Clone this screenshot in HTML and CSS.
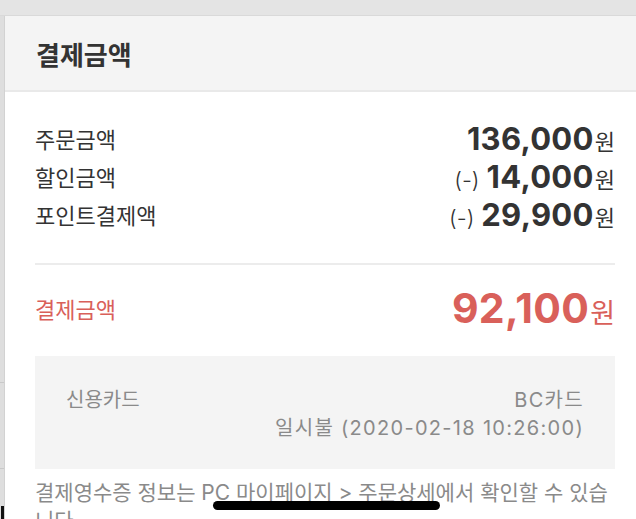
FILE: index.html
```html
<!DOCTYPE html>
<html lang="ko">
<head>
<meta charset="utf-8">
<link rel="stylesheet" href="styles.css">
</head>
<body>
<div class="topband"></div>
<div class="main">
  <div class="side">
    <div class="side-seg seg1"></div>
    <div class="side-seg seg2"></div>
    <div class="side-rest"></div>
  </div>
  <div class="sheet">
    <div class="sheet-head"><h1 class="title">결제금액</h1></div>
    <div class="sheet-body">
      <div class="rows">
        <div class="row"><span class="label">주문금액</span><span class="amount"><b class="num">136,000</b><span class="won">원</span></span></div>
        <div class="row"><span class="label">할인금액</span><span class="amount"><span class="minus">(-)</span><b class="num">14,000</b><span class="won">원</span></span></div>
        <div class="row"><span class="label">포인트결제액</span><span class="amount"><span class="minus">(-)</span><b class="num">29,900</b><span class="won">원</span></span></div>
      </div>
      <div class="divider"></div>
      <div class="row total"><span class="label">결제금액</span><span class="amount"><b class="num">92,100</b><span class="won">원</span></span></div>
      <div class="paybox">
        <div class="paybox-row"><span>신용카드</span><span class="paybox-right">BC카드<br>일시불 (2020-02-18 10:26:00)</span></div>
      </div>
      <p class="notice">결제영수증 정보는 PC 마이페이지 &gt; 주문상세에서 확인할 수 있습니다</p>
    </div>
  </div>
</div>
<div class="corner-mark"></div>
<div class="home-indicator"></div>
</body>
</html>
```
FILE: styles.css
```css
html, body {
  margin: 0;
  padding: 0;
  width: 636px;
  height: 519px;
  overflow: hidden;
  background: #ffffff;
  font-family: "Noto Sans CJK KR", "Noto Sans", sans-serif;
  color: #333333;
}
.topband {
  height: 15px;
  background: #e4e4e4;
  border-bottom: 1px solid #d9d9d9;
}
.main {
  display: flex;
}
.side {
  width: 4px;
  flex-shrink: 0;
  background: #dedede;
  border-right: 1px solid #d2d2d2;
  display: flex;
  flex-direction: column;
  height: 503px;
}
.side-seg {
  border-bottom: 1px solid #c9c9c9;
}
.seg1 { height: 366px; }
.seg2 { height: 85px; }
.side-rest { flex: 1; }
.sheet {
  width: 640px;
  flex-shrink: 0;
  background: #ffffff;
}
.sheet-head {
  height: 74px;
  background: #f4f4f4;
  border-bottom: 2px solid #e9e9e9;
  display: flex;
  align-items: center;
  padding-left: 31px;
}
.title {
  margin: 0;
  font-size: 26px;
  font-weight: 700;
  color: #333;
  line-height: 1;
  padding-top: 1px;
}
.sheet-body {
  padding: 0 30px;
}
.rows {
  padding-top: 27px;
}
.row {
  display: flex;
  justify-content: space-between;
  align-items: center;
  height: 38px;
}
.label {
  font-size: 22px;
  color: #333;
}
.amount {
  display: flex;
  align-items: baseline;
}
.num {
  font-family: "Inter", "Roboto", sans-serif;
  font-weight: 700;
  font-size: 31px;
  color: #333;
  letter-spacing: 0.3px;
}
.minus {
  font-family: "Inter", "Roboto", sans-serif;
  font-size: 22px;
  font-weight: 300;
  margin-right: 7px;
  color: #333;
}
.won {
  font-size: 22px;
  margin-left: 1px;
  color: #333;
}
.divider {
  height: 2px;
  background: #ececec;
  margin-top: 30px;
}
.row.total {
  height: 60px;
  margin-top: 13px;
}
.total .label { color: #d9605a; }
.total .num { color: #d9605a; font-size: 41px; }
.total .won { color: #d9605a; font-size: 27px; }
.paybox {
  background: #f4f4f4;
  margin-top: 18px;
  padding: 30px 32px 27px 31px;
}
.paybox-row {
  display: flex;
  justify-content: space-between;
  align-items: flex-start;
  font-family: "Inter", "Noto Sans CJK KR", sans-serif;
  font-size: 20px;
  line-height: 28px;
  color: #8a8a8a;
}
.paybox-right {
  text-align: right;
  letter-spacing: 1.3px;
  margin-right: -1px;
}
.notice {
  margin: 10px 0 0;
  font-family: "Inter", "Noto Sans CJK KR", sans-serif;
  font-size: 21px;
  line-height: 28px;
  color: #8a8a8a;
}
.home-indicator {
  position: fixed;
  left: 213px;
  top: 501px;
  width: 227px;
  height: 9px;
  border-radius: 5px;
  background: #000;
}
.corner-mark {
  position: fixed;
  left: 1px;
  top: 506px;
  width: 3px;
  height: 13px;
  background: #111;
}
```
